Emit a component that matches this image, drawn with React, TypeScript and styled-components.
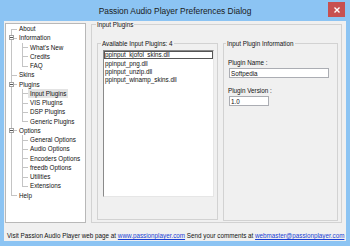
import React from "react";
import styled, { createGlobalStyle } from "styled-components";

const GlobalStyle = createGlobalStyle`
  html, body {
    margin: 0;
    padding: 0;
  }
  body {
    width: 350px;
    height: 246px;
    overflow: hidden;
    font-family: "Liberation Sans", Arial, sans-serif;
  }
`;

type TreeNode = { label: string; children?: string[] };

const tree: TreeNode[] = [
  { label: "About" },
  { label: "Information", children: ["What's New", "Credits", "FAQ"] },
  { label: "Skins" },
  {
    label: "Plugins",
    children: ["Input Plugins", "VIS Plugins", "DSP Plugins", "Generic Plugins"],
  },
  {
    label: "Options",
    children: [
      "General Options",
      "Audio Options",
      "Encoders Options",
      "freedb Options",
      "Utilities",
      "Extensions",
    ],
  },
  { label: "Help" },
];

const plugins = [
  "ppinput_kjofol_skins.dll",
  "ppinput_png.dll",
  "ppinput_unzip.dll",
  "ppinput_winamp_skins.dll",
];

type Cell = { up: boolean; down: boolean; right: boolean; box?: boolean };
type Row = { label: string; cells: Cell[]; selected?: boolean };

function flatten(): Row[] {
  const rows: Row[] = [];
  tree.forEach((node, i) => {
    const first = i === 0;
    const last = i === tree.length - 1;
    rows.push({
      label: node.label,
      cells: [{ up: !first, down: !last, right: true, box: !!node.children }],
    });
    (node.children || []).forEach((child, j, arr) => {
      rows.push({
        label: child,
        selected: child === "Input Plugins",
        cells: [
          { up: !last, down: !last, right: false },
          { up: true, down: j < arr.length - 1, right: true },
        ],
      });
    });
  });
  return rows;
}

export default function App() {
  const rows = flatten();

  return (
    <>
      <GlobalStyle />
      <Window>
        <TitleBar>
          <span />
          <Title>Passion Audio Player Preferences Dialog</Title>
          <CloseButton>
            <svg width="6" height="6" viewBox="0 0 6 6">
              <path d="M0.5 0.5 L5.5 5.5 M5.5 0.5 L0.5 5.5" stroke="#fff" strokeWidth="1.4" />
            </svg>
          </CloseButton>
        </TitleBar>

        <Client>
          <Body>
            <Tree>
              {rows.map((row) => (
                <TreeRow key={row.label}>
                  {row.cells.map((c, k) => (
                    <Gutter key={k} $up={c.up} $down={c.down} $right={c.right}>
                      {c.box && <Expander />}
                    </Gutter>
                  ))}
                  <TreeLabel $selected={row.selected}>{row.label}</TreeLabel>
                </TreeRow>
              ))}
            </Tree>

            <OuterGroup>
              <Legend $inset={4}>Input Plugins</Legend>
              <GroupRow>
                <AvailableGroup>
                  <Legend $inset={3}>Available Input Plugins: 4</Legend>
                  <AvailableContent>
                    <ListBox>
                      {plugins.map((p, i) => (
                        <ListItem key={p} $focused={i === 0}>
                          {p}
                        </ListItem>
                      ))}
                    </ListBox>
                  </AvailableContent>
                </AvailableGroup>

                <InfoGroup>
                  <Legend $inset={2}>Input Plugin Information</Legend>
                  <InfoContent>
                    <FieldLabel>Plugin Name :</FieldLabel>
                    <TextBox $width={100} value="Softpedia" readOnly />
                    <FieldLabel $gap>Plugin Version :</FieldLabel>
                    <TextBox $width={40} value="1.0" readOnly />
                  </InfoContent>
                </InfoGroup>
              </GroupRow>
            </OuterGroup>
          </Body>

          <Footer>
            <span>
              Visit Passion Audio Player web page at{" "}
              <Link href="#">www.passionplayer.com</Link> Send your comments at{" "}
              <Link href="#">webmaster@passionplayer.com</Link>
            </span>
          </Footer>
        </Client>
      </Window>
    </>
  );
}

const Window = styled.div`
  width: 350px;
  height: 246px;
  box-sizing: border-box;
  padding: 0 4px 5px 4px;
  background: #8cc4f3;
  display: flex;
  flex-direction: column;
`;

const TitleBar = styled.div`
  height: 21px;
  flex: none;
  display: grid;
  grid-template-columns: 1fr auto 1fr;
  align-items: center;
`;

const Title = styled.span`
  font-size: 8.4px;
  color: #1a1a1a;
  white-space: nowrap;
`;

const CloseButton = styled.div`
  justify-self: end;
  align-self: start;
  margin: 2px 1px 0 0;
  width: 17px;
  height: 15px;
  background: #c75050;
  display: flex;
  align-items: center;
  justify-content: center;
`;

const Client = styled.div`
  flex: 1;
  background: #f0f0f0;
  display: flex;
  flex-direction: column;
`;

const Body = styled.div`
  display: flex;
  align-items: flex-start;
  gap: 5px;
  padding: 0 4px 0 1px;
`;

const Tree = styled.div`
  width: 81px;
  height: 200px;
  margin-top: 2px;
  box-sizing: border-box;
  border: 1px solid #b8b8b8;
  background: #fff;
  flex: none;
`;

const TreeRow = styled.div`
  height: 9.25px;
  display: flex;
  align-items: center;
`;

const Gutter = styled.span<{ $up: boolean; $down: boolean; $right: boolean }>`
  position: relative;
  flex: none;
  width: 11px;
  height: 100%;
  display: flex;
  align-items: center;
  justify-content: center;

  &::before {
    content: "";
    position: absolute;
    left: 5px;
    top: ${(p) => (p.$up ? "0" : "50%")};
    bottom: ${(p) => (p.$down ? "0" : "50%")};
    border-left: 1px solid #c4c4c4;
  }

  &::after {
    content: ${(p) => (p.$right ? '""' : "none")};
    position: absolute;
    left: 5px;
    right: 0;
    top: 50%;
    border-top: 1px solid #c4c4c4;
  }
`;

const Expander = styled.span`
  position: relative;
  z-index: 1;
  width: 5px;
  height: 5px;
  box-sizing: border-box;
  border: 1px solid #a0a0a0;
  background: #fff;
  display: flex;
  align-items: center;
  justify-content: center;

  &::after {
    content: "";
    width: 3px;
    height: 1px;
    background: #555;
  }
`;

const TreeLabel = styled.span<{ $selected?: boolean }>`
  padding: 0 2px;
  height: 100%;
  display: flex;
  align-items: center;
  font-size: 6.3px;
  color: #111;
  white-space: nowrap;
  background: ${(p) => (p.$selected ? "#e3e3e3" : "transparent")};
`;

const OuterGroup = styled.fieldset`
  margin: 0;
  padding: 0;
  min-width: 0;
  flex: 1;
  height: 202px;
  box-sizing: border-box;
  border: 1px solid #d2d2d2;
  display: flex;
  flex-direction: column;
`;

const Legend = styled.legend<{ $inset: number }>`
  margin-left: ${(p) => p.$inset}px;
  padding: 0 1px;
  font-size: 6.3px;
  line-height: 7px;
  color: #111;
  white-space: nowrap;
`;

const GroupRow = styled.div`
  flex: 1;
  display: flex;
  gap: 5px;
  padding: 11.5px 3px 1px 5px;
`;

const AvailableGroup = styled.fieldset`
  margin: 0 0 1px 0;
  padding: 0;
  min-width: 0;
  width: 121px;
  flex: none;
  box-sizing: border-box;
  border: 1px solid #d2d2d2;
`;

const AvailableContent = styled.div`
  padding: 3px 3px 0 5px;
`;

const ListBox = styled.div`
  height: 147.5px;
  box-sizing: border-box;
  background: #fff;
  border: 1px solid;
  border-color: #8a8a8a #e6e6e6 #e6e6e6 #8a8a8a;
`;

const ListItem = styled.div<{ $focused?: boolean }>`
  height: 8.4px;
  box-sizing: border-box;
  padding-left: 1px;
  display: flex;
  align-items: center;
  font-size: 6.3px;
  color: #111;
  white-space: nowrap;
  outline: ${(p) => (p.$focused ? "1px solid #555" : "none")};
  outline-offset: -1px;
`;

const InfoGroup = styled.fieldset`
  margin: 0;
  padding: 0;
  min-width: 0;
  flex: 1;
  box-sizing: border-box;
  border: 1px solid #d2d2d2;
`;

const InfoContent = styled.div`
  display: flex;
  flex-direction: column;
  align-items: flex-start;
  padding: 12px 4px 0 4px;
`;

const FieldLabel = styled.span<{ $gap?: boolean }>`
  margin-top: ${(p) => (p.$gap ? "8.5px" : "0")};
  font-size: 6.3px;
  line-height: 7px;
  color: #111;
`;

const TextBox = styled.input<{ $width: number }>`
  margin: 2.5px 0 0 1px;
  width: ${(p) => p.$width}px;
  height: 10px;
  box-sizing: border-box;
  padding: 0 0 0 1px;
  border: 1px solid #abadb3;
  background: #fff;
  font-family: "Liberation Sans", Arial, sans-serif;
  font-size: 6.3px;
  color: #111;
  outline: none;
`;

const Footer = styled.div`
  flex: 1;
  display: flex;
  align-items: flex-end;
  padding: 0 0 2px 3px;
  font-size: 6.3px;
  line-height: 7px;
  color: #111;
  white-space: nowrap;
`;

const Link = styled.a`
  color: #1a3fd4;
  text-decoration: underline;
`;
